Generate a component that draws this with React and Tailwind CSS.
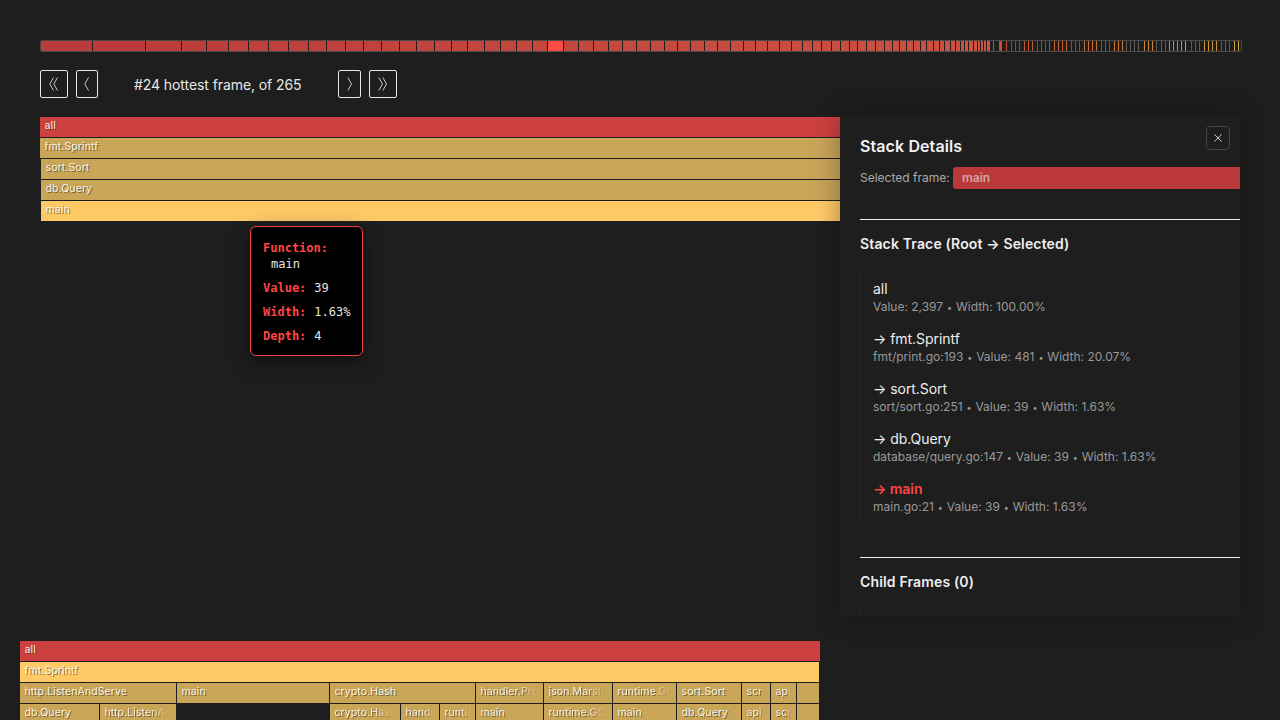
const EDGES = [41, 92, 145, 181, 206, 228, 248, 268, 288, 308, 326, 345, 363, 381, 399, 416, 434, 451, 467, 484, 500, 516, 532, 547, 563, 578, 593, 608, 622, 636, 650, 664, 677, 690, 704, 717, 730, 743, 755, 767, 779, 791, 802, 812, 821, 831, 840, 849, 857, 866, 875, 884, 892, 899, 906, 913, 920, 926, 933, 939, 944, 950, 955, 960, 964, 968, 973, 977, 980, 983, 986, 990]

// [x position, coloured?] for the thin frames at the tail of the minimap
const TAIL = [
  [993, 1], [999, 1], [1000, 1], [1001, 1], [1006, 1], [1011, 0], [1015, 0], [1019, 0], [1024, 1], [1028, 1], [1032, 1],
  [1037, 0], [1041, 0], [1045, 0], [1049, 0], [1054, 1], [1058, 1], [1062, 1], [1066, 1], [1071, 0], [1075, 0], [1079, 0],
  [1084, 1], [1088, 1], [1092, 1], [1096, 1], [1101, 0], [1105, 0], [1109, 0], [1114, 1], [1118, 1], [1122, 1], [1126, 0],
  [1130, 0], [1134, 0], [1138, 0], [1144, 1], [1148, 1], [1152, 1], [1156, 0], [1161, 0], [1165, 0], [1169, 1], [1173, 1],
  [1177, 1], [1181, 1], [1185, 1], [1191, 0], [1195, 0], [1199, 0], [1204, 1], [1208, 1], [1212, 1], [1216, 1], [1221, 0],
  [1225, 0], [1229, 0], [1234, 1], [1238, 1],
]

const TRACE = [
  { name: 'all', meta: ['Value: 2,397', 'Width: 100.00%'] },
  { name: '→ fmt.Sprintf', meta: ['fmt/print.go:193', 'Value: 481', 'Width: 20.07%'] },
  { name: '→ sort.Sort', meta: ['sort/sort.go:251', 'Value: 39', 'Width: 1.63%'] },
  { name: '→ db.Query', meta: ['database/query.go:147', 'Value: 39', 'Width: 1.63%'] },
  { name: '→ main', meta: ['main.go:21', 'Value: 39', 'Width: 1.63%'], selected: true },
]

const ROW_3 = [
  { label: 'http.ListenAndServe', w: 'w-[156px]' },
  { label: 'main', w: 'w-[152px]' },
  { label: 'crypto.Hash', w: 'w-[145px]' },
  { label: 'handler.Process', w: 'w-[67px]', fade: true },
  { label: 'json.Marshal', w: 'w-[68px]', fade: true },
  { label: 'runtime.GC', w: 'w-[63px]', fade: true },
  { label: 'sort.Sort', w: 'w-[64px]' },
  { label: 'scrape', w: 'w-[28px]', fade: true },
  { label: 'api', w: 'w-[25px]', fade: true },
  { label: '', w: 'w-[22px]' },
]

const ROW_4 = [
  { label: 'db.Query', w: 'w-[79px]' },
  { label: 'http.ListenAndServe', w: 'w-[76px]', fade: true },
  { w: 'w-[152px]', empty: true },
  { label: 'crypto.Hash', w: 'w-[70px]', fade: true },
  { label: 'handler', w: 'w-[38px]', fade: true },
  { label: 'runtime', w: 'w-[35px]', fade: true },
  { label: 'main', w: 'w-[67px]' },
  { label: 'runtime.GC', w: 'w-[68px]', fade: true },
  { label: 'main', w: 'w-[63px]' },
  { label: 'db.Query', w: 'w-[64px]' },
  { label: 'api', w: 'w-[28px]', fade: true },
  { label: 'scrape', w: 'w-[25px]', fade: true },
  { label: '', w: 'w-[22px]' },
]

const mix = (a, b, t) => {
  const c = a.map((v, i) => Math.round(v + (b[i] - v) * t))
  return `rgb(${c[0]},${c[1]},${c[2]})`
}

const Minimap = () => (
  <svg width="1202" height="12" className="block">
    <rect x="0.5" y="0.5" width="1201" height="11" rx="1.5" fill="#1e1e1e" stroke="#4a4a4a" />
    <g shapeRendering="crispEdges">
      {EDGES.slice(0, -1).map((x, i) => {
        const start = i === 0 ? x : x + 1
        return (
          <rect
            key={x}
            x={start - 40}
            y="1"
            width={EDGES[i + 1] - start}
            height="10"
            fill={x === 547 ? '#ff4d44' : mix([187, 58, 58], [204, 82, 64], (x - 41) / 950)}
          />
        )
      })}
      {TAIL.map(([x, on]) => (
        <rect
          key={x}
          x={x - 40}
          y="1"
          width="1"
          height="10"
          fill={on ? mix([200, 72, 48], [201, 165, 58], (x - 990) / 250) : '#5c5c5c'}
        />
      ))}
    </g>
  </svg>
)

const Chevrons = ({ dir, count }) => (
  <svg width={count === 2 ? 10 : 6} height="16" fill="none" stroke="#c8c8c8" strokeWidth="1">
    {Array.from({ length: count }).map((_, i) => (
      <path
        key={i}
        d={dir === 'left' ? `M${4.5 + i * 4} 1.5 L${0.8 + i * 4} 8 L${4.5 + i * 4} 14.5` : `M${0.8 + i * 4} 1.5 L${4.5 + i * 4} 8 L${0.8 + i * 4} 14.5`}
      />
    ))}
  </svg>
)

const NavButton = ({ w, dir, count }) => (
  <button className={`${w} h-7 flex items-center justify-center border border-[#e4e4e4] rounded-[2px]`}>
    <Chevrons dir={dir} count={count} />
  </button>
)

const Frame = ({ label, w, color = 'bg-[#c9a558]', fade }) => (
  <div className={`${w} ${color} h-5 shrink-0 overflow-hidden pl-[4.5px] pr-[5px]`}>
    <div
      className={`whitespace-nowrap overflow-hidden text-[10.5px] tracking-[0.1px] leading-[17px] text-[#f7f3ea] [text-shadow:1px_1px_0_rgba(60,42,8,0.6)] ${fade ? '[mask-image:linear-gradient(to_right,#000_65%,transparent_98%)]' : ''}`}
    >
      {label}
    </div>
  </div>
)

const Tooltip = () => (
  <div className="absolute left-[250px] top-[226px] w-[113px] h-[130px] bg-black border border-[#ef4444] rounded-md px-3 pt-[13px] text-xs leading-4 text-[#e6e6e6] shadow-[0_6px_20px_rgba(0,0,0,0.5)] font-['DejaVu_Sans_Mono',monospace] whitespace-nowrap">
    <div className="font-bold text-[#ff4444]">Function:</div>
    <div className="pl-2">main</div>
    <div className="mt-2"><span className="font-bold text-[#ff4444] mr-2">Value:</span>39</div>
    <div className="mt-2"><span className="font-bold text-[#ff4444] mr-2">Width:</span>1.63%</div>
    <div className="mt-2"><span className="font-bold text-[#ff4444] mr-2">Depth:</span>4</div>
  </div>
)

const Meta = ({ parts }) => (
  <div className="text-xs leading-4 text-[#999999]">
    {parts.map((part, i) => (
      <span key={part}>
        {i > 0 && <> <span className="text-[9px] mx-[0.5px]">•</span> </>}
        {part}
      </span>
    ))}
  </div>
)

const Panel = () => (
  <div className="absolute left-[840px] top-[116px] w-[400px] h-[501px] overflow-hidden bg-[#1e1e1e] shadow-[0_0_24px_rgba(0,0,0,0.35)] font-['Inter',sans-serif]">
    <button className="absolute right-[10px] top-[10px] w-6 h-6 flex items-center justify-center border border-[#444] rounded text-[#cccccc]">
      <svg width="10" height="10" stroke="currentColor" strokeWidth="1"><path d="M1.5 1.5 L8.5 8.5 M8.5 1.5 L1.5 8.5" /></svg>
    </button>
    <div className="w-[440px] pl-5 pt-5">
      <h2 className="text-base leading-5 font-semibold tracking-[0.1px] text-[#f2f2f2]">Stack Details</h2>
      <div className="mt-[11px] flex items-center h-[22px] text-xs text-[#aaaaaa]">
        <span className="w-[93px]">Selected frame:</span>
        <span className="flex-1 h-[22px] pl-[9px] leading-[22px] font-semibold bg-[#bb3838] rounded-[3px] text-[#cfa6a6]">main</span>
      </div>

      <div className="mt-[30px] border-t border-[#eeeeee]" />
      <h3 className="mt-[15px] text-sm leading-[17px] font-semibold tracking-[0.15px] text-[#efefef]">Stack Trace (Root → Selected)</h3>

      <div className="mt-[15px] h-[260px] pl-3 pt-[11px] border border-[#2e1f22] rounded">
        {TRACE.map((item) => (
          <div key={item.name} className="h-[50px]">
            <div className={`text-sm leading-[20px] tracking-[-0.05px] ${item.selected ? 'font-semibold text-[#ff4444]' : 'text-[#eeeeee]'}`}>{item.name}</div>
            <Meta parts={item.meta} />
          </div>
        ))}
      </div>

      <div className="mt-[30px] border-t border-[#eeeeee]" />
      <h3 className="mt-[15px] text-sm leading-[17px] font-semibold tracking-[0.15px] text-[#efefef]">Child Frames (0)</h3>
      <div className="mt-[15px] h-20 border border-[#2e1f22] rounded" />
    </div>
  </div>
)

export default function App() {
  return (
    <div className="relative w-[1280px] h-[720px] overflow-hidden bg-[#1e1e1e] font-['Inter',sans-serif]">
      <div className="pt-10 pl-10">
        <Minimap />

        <div className="mt-[18px] flex items-center h-7">
          <NavButton w="w-7" dir="left" count={2} />
          <div className="ml-2"><NavButton w="w-[22px]" dir="left" count={1} /></div>
          <div className="ml-9 w-[204px] pt-px text-sm tracking-[-0.08px] text-[#e8e8e8]">#24 hottest frame, of 265</div>
          <NavButton w="w-[23px]" dir="right" count={1} />
          <div className="ml-2"><NavButton w="w-7" dir="right" count={2} /></div>
        </div>

        <div className="mt-[19px] flex flex-col gap-px w-[1200px]">
          <Frame label="all" w="w-[1200px]" color="bg-[#cc4040]" />
          <Frame label="fmt.Sprintf" w="w-[1200px]" />
          <div className="pl-px"><Frame label="sort.Sort" w="w-[1199px]" /></div>
          <div className="pl-px"><Frame label="db.Query" w="w-[1199px]" /></div>
          <div className="pl-px"><Frame label="main" w="w-[1199px]" color="bg-[#ffc966]" /></div>
        </div>
      </div>

      <Tooltip />
      <Panel />

      <div className="absolute left-5 top-[641px] w-[800px] flex flex-col gap-px">
        <Frame label="all" w="w-[800px]" color="bg-[#cc4040]" />
        <Frame label="fmt.Sprintf" w="w-[799px]" color="bg-[#ffc966]" />
        <div className="flex gap-px">
          {ROW_3.map((f) => <Frame key={f.w + f.label} {...f} />)}
        </div>
        <div className="flex gap-px">
          {ROW_4.map((f, i) => (f.empty
            ? <div key={i} className={`${f.w} shrink-0`} />
            : <Frame key={i} {...f} />))}
        </div>
      </div>
    </div>
  )
}
